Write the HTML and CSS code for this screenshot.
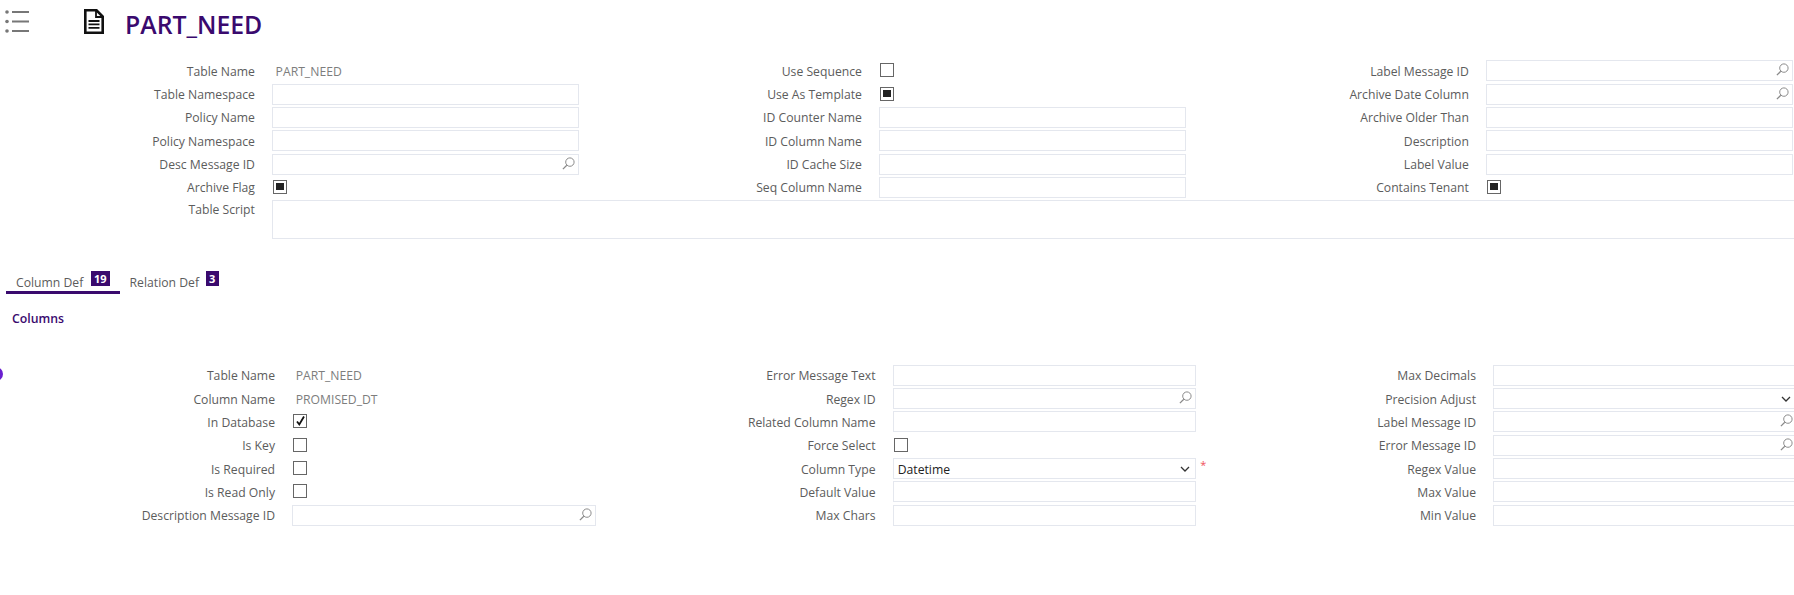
FILE: index.html
```html
<!DOCTYPE html>
<html lang="en">
<head>
<meta charset="utf-8">
<title>PART_NEED</title>
<link rel="stylesheet" href="styles.css">
</head>
<body>
<svg width="0" height="0" class="defs">
  <symbol id="lens" viewBox="0 0 13 13"><circle cx="7.9" cy="5.1" r="4.2" fill="none" stroke="#8a8a8a" stroke-width="1"/><path d="M4.8 8.2 L0.9 12.1" stroke="#8a8a8a" stroke-width="1.3" fill="none"/></symbol>
  <symbol id="chev" viewBox="0 0 10 6"><path d="M1 1 L5 5 L9 1" stroke="#333" stroke-width="1.3" fill="none"/></symbol>
</svg>
<header class="header">
  <svg class="list-icon" width="24" height="24" viewBox="0 0 24 24"><g fill="#777"><circle cx="2" cy="3" r="1.8"/><circle cx="2" cy="12.5" r="1.8"/><circle cx="2" cy="22" r="1.8"/><rect x="7" y="2" width="17" height="2"/><rect x="7" y="11.5" width="17" height="2"/><rect x="7" y="21" width="17" height="2"/></g></svg>
  <svg class="doc-icon" width="20" height="25" viewBox="0 0 20 25"><path d="M1.3 1.3 H12.5 L18.7 7.5 V23.7 H1.3 Z" fill="#fff" stroke="#111" stroke-width="2.6"/><path d="M12 1.5 V8 H18.5" fill="none" stroke="#111" stroke-width="1.8"/><path d="M4.5 12 H15.5 M4.5 15.4 H15.5 M4.5 18.8 H15.5" stroke="#111" stroke-width="1.8"/></svg>
  <h1 class="title">PART_NEED</h1>
</header>

<section class="form form-top">
  <div class="col">
    <div class="row"><label>Table Name</label><span class="value">PART_NEED</span></div>
    <div class="row"><label>Table Namespace</label><div class="field"></div></div>
    <div class="row"><label>Policy Name</label><div class="field"></div></div>
    <div class="row"><label>Policy Namespace</label><div class="field"></div></div>
    <div class="row"><label>Desc Message ID</label><div class="field"><svg class="lens"><use href="#lens"/></svg></div></div>
    <div class="row"><label>Archive Flag</label><span class="check filled"></span></div>
  </div>
  <div class="col">
    <div class="row"><label>Use Sequence</label><span class="check"></span></div>
    <div class="row"><label>Use As Template</label><span class="check filled"></span></div>
    <div class="row"><label>ID Counter Name</label><div class="field"></div></div>
    <div class="row"><label>ID Column Name</label><div class="field"></div></div>
    <div class="row"><label>ID Cache Size</label><div class="field"></div></div>
    <div class="row"><label>Seq Column Name</label><div class="field"></div></div>
  </div>
  <div class="col">
    <div class="row"><label>Label Message ID</label><div class="field"><svg class="lens"><use href="#lens"/></svg></div></div>
    <div class="row"><label>Archive Date Column</label><div class="field"><svg class="lens"><use href="#lens"/></svg></div></div>
    <div class="row"><label>Archive Older Than</label><div class="field"></div></div>
    <div class="row"><label>Description</label><div class="field"></div></div>
    <div class="row"><label>Label Value</label><div class="field"></div></div>
    <div class="row"><label>Contains Tenant</label><span class="check filled"></span></div>
  </div>
  <div class="script-row"><label>Table Script</label><div class="script-box"></div></div>
</section>

<nav class="tabs">
  <div class="tab active"><span>Column Def</span><b class="badge">19</b></div>
  <div class="tab"><span>Relation Def</span><b class="badge">3</b></div>
</nav>
<h2 class="section-title">Columns</h2>
<span class="dot"></span>

<section class="form form-bottom">
  <div class="col">
    <div class="row"><label>Table Name</label><span class="value">PART_NEED</span></div>
    <div class="row"><label>Column Name</label><span class="value">PROMISED_DT</span></div>
    <div class="row"><label>In Database</label><span class="check"><svg class="tick" width="13" height="13" viewBox="0 0 13 13"><path d="M3 6.5 L5.3 9.5 L10 1.5" fill="none" stroke="#111" stroke-width="1.8"/></svg></span></div>
    <div class="row"><label>Is Key</label><span class="check"></span></div>
    <div class="row"><label>Is Required</label><span class="check"></span></div>
    <div class="row"><label>Is Read Only</label><span class="check"></span></div>
    <div class="row"><label>Description Message ID</label><div class="field"><svg class="lens"><use href="#lens"/></svg></div></div>
  </div>
  <div class="col">
    <div class="row"><label>Error Message Text</label><div class="field"></div></div>
    <div class="row"><label>Regex ID</label><div class="field"><svg class="lens"><use href="#lens"/></svg></div></div>
    <div class="row"><label>Related Column Name</label><div class="field"></div></div>
    <div class="row"><label>Force Select</label><span class="check"></span></div>
    <div class="row"><label>Column Type</label><div class="field select"><span>Datetime</span><svg class="chev"><use href="#chev"/></svg></div><i class="req">*</i></div>
    <div class="row"><label>Default Value</label><div class="field"></div></div>
    <div class="row"><label>Max Chars</label><div class="field"></div></div>
  </div>
  <div class="col">
    <div class="row"><label>Max Decimals</label><div class="field"></div></div>
    <div class="row"><label>Precision Adjust</label><div class="field select"><span></span><svg class="chev"><use href="#chev"/></svg></div></div>
    <div class="row"><label>Label Message ID</label><div class="field"><svg class="lens"><use href="#lens"/></svg></div></div>
    <div class="row"><label>Error Message ID</label><div class="field"><svg class="lens"><use href="#lens"/></svg></div></div>
    <div class="row"><label>Regex Value</label><div class="field"></div></div>
    <div class="row"><label>Max Value</label><div class="field"></div></div>
    <div class="row"><label>Min Value</label><div class="field"></div></div>
  </div>
</section>
</body>
</html>
```
FILE: styles.css
```css
* { box-sizing: border-box; }
html, body { margin: 0; height: 595px; width: 1794px; overflow: hidden; background: #fff; }
body { position: relative; font-family: "Open Sans", "Noto Sans", sans-serif; font-size: 12.2px; color: #5c5c5c; }
.defs { position: absolute; }

.header { display: flex; align-items: flex-start; height: 59.1px; }
.list-icon { margin: 9px 0 0 5px; }
.doc-icon { margin: 9px 0 0 55px; }
.title { margin: 6px 0 0 21px; font-size: 24.8px; line-height: 36px; font-weight: 600; color: #3a0a6e; }

.form { display: grid; grid-template-columns: repeat(3, var(--col)); column-gap: var(--gap); width: 1794px; overflow: hidden; }
.form-top { --col: 574.8px; --gap: 32.2px; --input: 306.8px; --label-col: 268px; --label-pad: 17.2px; padding-left: 4.1px; }
.form-bottom { --col: 571px; --gap: 29.5px; --input: 303.5px; --label-col: 267.5px; --label-pad: 17.2px; padding-left: 24.7px; margin-top: 34.6px; }

.row { display: grid; grid-template-columns: var(--label-col) var(--input) auto; align-items: center; height: 23.33px; }
.row label, .script-row label { text-align: right; padding-right: var(--label-pad); padding-top: 1px; }
.value { color: #7d7d7d; padding-left: 3.5px; padding-top: 1px; }

.field { position: relative; height: 21px; border: 1px solid #e4e7ee; background: #fff; display: flex; align-items: center; }
.lens { position: absolute; right: 3px; top: 2px; width: 13px; height: 13px; }
.select { justify-content: space-between; padding: 1px 4px 0; color: #222; }
.chev { width: 10px; height: 6px; margin: -1px 1px 0 0; }
.req { color: #f0535b; font-style: normal; font-size: 11px; line-height: 11px; margin: -8px 0 0 4px; }

.check { position: relative; display: block; width: 14px; height: 14px; margin: -1px 0 0 1px; border: 1.3px solid #666; background: #fff; }
.check.filled::after { content: ""; position: absolute; left: 2px; top: 2px; width: 7.5px; height: 7.5px; background: #222; }
.tick { position: absolute; left: -0.3px; top: -0.3px; }

.script-row { grid-column: 1 / -1; display: flex; align-items: flex-start; margin-top: 0.9px; }
.script-row label { flex: none; width: var(--label-col); }
.script-box { flex: none; width: 1530px; height: 39.3px; border: 1px solid #e4e7ee; }

.tabs { display: flex; margin: 31.7px 0 0 6px; }
.tab { display: flex; align-items: flex-start; gap: 6px; height: 23px; padding: 0 10px; line-height: 21px; }
.tab.active { border-bottom: 3px solid #3a0a6e; }
.tab span { padding-top: 1px; white-space: nowrap; }
.tab:first-child span { width: 69px; }
.tab + .tab span { width: 70px; }
.badge { background: #3a0a6e; color: #fff; font-size: 11px; font-weight: 700; line-height: 15px; height: 15px; padding: 0 3px; min-width: 13px; text-align: center; }

.section-title { margin: 15px 0 0 12px; font-size: 12.3px; line-height: 20px; font-weight: 600; color: #3a0a6e; }
.dot { position: absolute; left: -11px; top: 367px; width: 14px; height: 14px; border-radius: 50%; background: #6a1fd0; }
```
